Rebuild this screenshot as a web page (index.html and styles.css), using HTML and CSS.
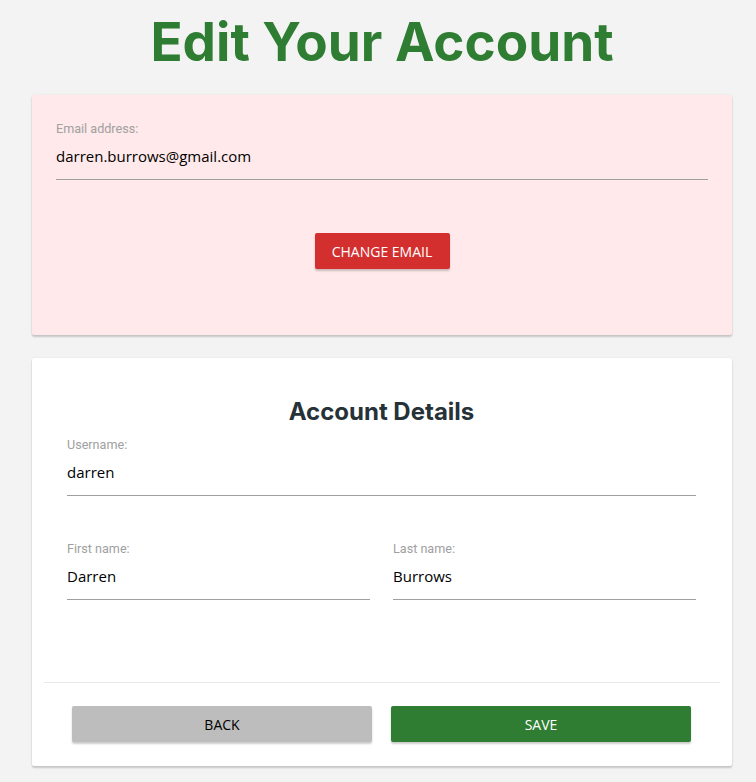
FILE: index.html
```html
<!DOCTYPE html>
<html>
<head>
<meta charset="utf-8">
<link rel="stylesheet" href="styles.css">
</head>
<body>
<h1 class="title">Edit Your Account</h1>
<section class="card card-pink">
  <div class="field">
    <div class="label">Email address:</div>
    <div class="value">darren.burrows@gmail.com</div>
  </div>
  <div class="center">
    <button class="btn btn-red">CHANGE EMAIL</button>
  </div>
</section>
<section class="card card-white">
  <div class="details">
    <h2 class="subtitle">Account Details</h2>
    <div class="field">
      <div class="label">Username:</div>
      <div class="value">darren</div>
    </div>
    <div class="row">
      <div class="field">
        <div class="label">First name:</div>
        <div class="value">Darren</div>
      </div>
      <div class="field">
        <div class="label">Last name:</div>
        <div class="value">Burrows</div>
      </div>
    </div>
  </div>
  <div class="actions">
    <button class="btn btn-grey">BACK</button>
    <button class="btn btn-green">SAVE</button>
  </div>
</section>
</body>
</html>
```

FILE: styles.css
```css
html, body {
  margin: 0;
  padding: 0;
  background: #f3f3f3;
}
body {
  padding: 0 24px 16px 32px;
  font-family: "Open Sans", "Noto Sans", sans-serif;
}
.title {
  margin: 10px 0 21px;
  text-align: center;
  font-family: Inter, Roboto, sans-serif;
  font-weight: 700;
  font-size: 53px;
  line-height: 64px;
  color: #2e7d32;
}
.card {
  width: 700px;
  box-shadow: 0 2px 2px rgba(0,0,0,0.18), 0 0 2px rgba(0,0,0,0.08);
  border-radius: 2px;
  box-sizing: border-box;
}
.card-pink {
  background: #ffe9ea;
  padding: 26px 24px 0;
  height: 240px;
}
.card-white {
  background: #fff;
  margin-top: 23px;
  height: 408px;
  padding: 12px 12px 0;
}
.field {
  border-bottom: 1px solid #a0a0a0;
  padding-bottom: 13px;
}
.label {
  font-family: Roboto, sans-serif;
  font-size: 12.6px;
  line-height: 16px;
  color: #a0a0a0;
}
.value {
  margin-top: 9px;
  font-size: 15px;
  line-height: 20px;
  color: #000;
}
.center {
  display: flex;
  justify-content: center;
  margin-top: 53px;
}
.btn {
  border: none;
  border-radius: 2px;
  height: 36px;
  font-family: "Open Sans", "Noto Sans", sans-serif;
  font-size: 14px;
  box-shadow: 0 2px 2px rgba(0,0,0,0.2);
}
.btn-red {
  background: #d32f2f;
  color: #fff;
  width: 135px;
  padding: 0;
}
.details {
  padding: 25px 24px 0 23px;
  height: 287px;
  border-bottom: 1px solid #e8e8e8;
}
.subtitle {
  margin: 2px 0 10px;
  text-align: center;
  font-family: Inter, Roboto, sans-serif;
  font-weight: 700;
  font-size: 24px;
  line-height: 30px;
  color: #263238;
}
.row {
  display: grid;
  grid-template-columns: 1fr 1fr;
  gap: 23px;
  margin-top: 45px;
}
.actions {
  display: grid;
  grid-template-columns: 300px 300px;
  gap: 19px;
  padding: 23px 0 0 28px;
}
.btn-grey {
  background: #bdbdbd;
  color: #000;
}
.btn-green {
  background: #2e7d32;
  color: #fff;
}
```
